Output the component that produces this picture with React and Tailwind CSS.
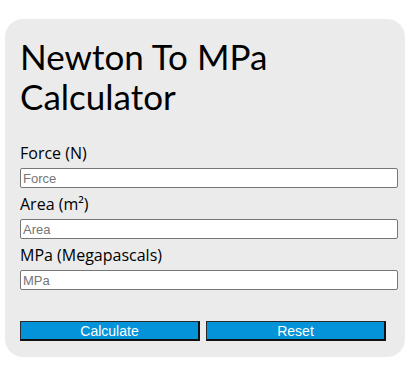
export default function App() {
  const font = { fontFamily: '"Open Sans", "Noto Sans", sans-serif' };
  const Field = ({ label, placeholder }) => (
    <>
      <div className="h-[31px] flex items-center text-[16px] leading-[24px] text-black" style={font}>
        {label}
      </div>
      <input
        placeholder={placeholder}
        className="h-[20px] w-[378px] border border-[#767676] rounded-[2px] bg-white px-[2px] text-[13px] placeholder:text-[#757575] outline-none"
        style={{ fontFamily: '"Liberation Sans", Arial, sans-serif' }}
      />
    </>
  );
  return (
    <div className="w-[418px] h-[370px] bg-white pt-[19px] pl-[5px]">
      <div className="w-[400px] h-[338px] bg-[#ebebeb] rounded-[18px] pt-[17px] px-[15px]">
        <h1 className="text-[35px] leading-[40px] text-black" style={{ fontFamily: 'Lato, "Open Sans", sans-serif' }}>
          Newton To MPa
          <br />
          Calculator
        </h1>
        <div className="mt-[21px] flex flex-col">
          <Field label="Force (N)" placeholder="Force" />
          <Field label={<span>Area (m²)</span>} placeholder="Area" />
          <Field label="MPa (Megapascals)" placeholder="MPa" />
        </div>
        <div className="mt-[31px] flex gap-[6px]">
          {["Calculate", "Reset"].map((t) => (
            <button
              key={t}
              className="w-[180px] h-[20px] bg-[#0492d8] text-white text-[14px] leading-none border-t border-l border-t-[#2a2a2a] border-l-[#2a2a2a] border-b-2 border-r-2 border-b-[#111] border-r-[#111] flex items-center justify-center"
              style={{ fontFamily: '"Liberation Sans", Arial, sans-serif' }}
            >
              {t}
            </button>
          ))}
        </div>
      </div>
    </div>
  );
}
